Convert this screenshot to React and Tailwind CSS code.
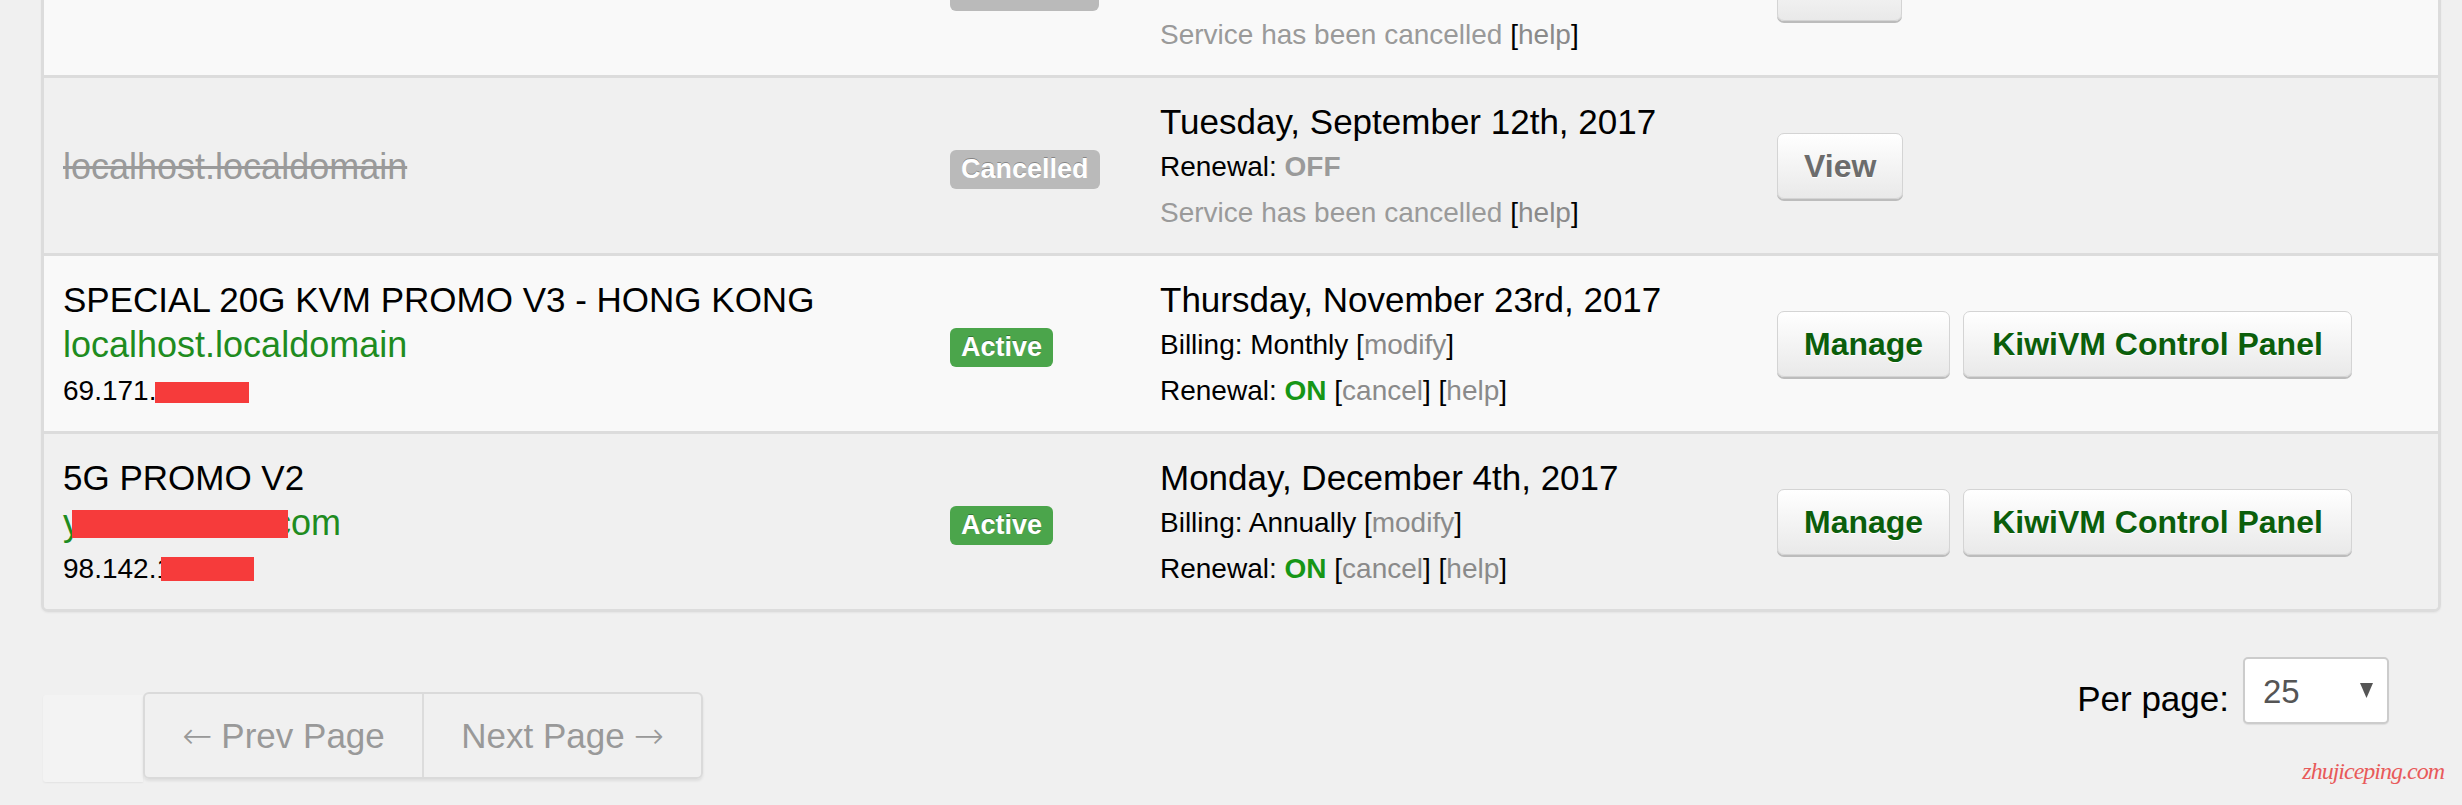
import React from 'react';

const rows = [
    { status: 'Cancelled', host: '', due: '', partial: true },
    { status: 'Cancelled', host: 'localhost.localdomain', due: 'Tuesday, September 12th, 2017' },
    {
        status: 'Active',
        title: 'SPECIAL 20G KVM PROMO V3 - HONG KONG',
        host: 'localhost.localdomain',
        ip: '69.171.',
        due: 'Thursday, November 23rd, 2017',
        billing: 'Monthly',
    },
    {
        status: 'Active',
        title: '5G PROMO V2',
        email: true,
        ip: '98.142.1',
        due: 'Monday, December 4th, 2017',
        billing: 'Annually',
    },
];

function Badge({ status, blank }) {
    const active = status === 'Active';
    return (
        <span
            className={`mt-[7px] h-[39px] px-[11px] flex items-center rounded-[6px] text-[27px] font-bold leading-none text-white [text-shadow:0_-1px_0_rgba(0,0,0,0.3)] ${active ? 'bg-[#4ba54b]' : 'bg-[#bababa]'} ${blank ? 'w-[149px]' : ''}`}
        >
            {blank ? null : status}
        </span>
    );
}

function Btn({ children, green, wide }) {
    return (
        <div
            className={`h-[66px] ${wide ? 'px-[28px]' : 'px-[26px]'} flex items-center rounded-[7px] border border-[#d4d4d4] bg-linear-to-b from-white to-[#e9e9e9] shadow-[0_2px_0_#bcbcbc] text-[32px] font-bold leading-none [text-shadow:0_1px_0_#ffffff] ${green ? 'text-[#0b5e0b]' : 'text-[#6c6c6c]'}`}
        >
            {children}
        </div>
    );
}

function Link({ children }) {
    return (
        <span>
            [<span className="text-[#8a8a8a]">{children}</span>]
        </span>
    );
}

function Redact({ w, h, shift = 0 }) {
    return (
        <span
            className="relative z-10 inline-block bg-[#f63b3b] align-[-3px]"
            style={{ width: w, height: h, marginLeft: shift }}
        />
    );
}

function ServiceRow({ row, index }) {
    const cancelled = row.status === 'Cancelled';
    return (
        <div
            className={`box-content h-[175px] grid grid-cols-[906px_210px_617px_1fr] ${index % 2 === 0 ? 'bg-[#f9f9f9]' : 'bg-[#f0f0f0]'} ${index > 0 ? 'border-t-[3px] border-[#dcdcdc]' : ''}`}
        >
            {/* product / host */}
            <div className="pl-[19px] pt-[3px] flex flex-col justify-center">
                {row.title && <div className="leading-[45.5px] text-[35px] whitespace-nowrap">{row.title}</div>}
                {cancelled ? (
                    row.host && <div className="leading-[45.5px] text-[36px] text-[#9a9a9a] line-through">{row.host}</div>
                ) : row.email ? (
                    <div className="leading-[45.5px] text-[36px] text-[#1f8c1f] whitespace-nowrap">
                        y<Redact w={216} h={28} shift={-9} />
                        <span className="ml-[-15px]">com</span>
                    </div>
                ) : (
                    <div className="leading-[45.5px] text-[36px] text-[#1f8c1f]">{row.host}</div>
                )}
                {row.ip && (
                    <div className="leading-[45.5px] text-[28px] whitespace-nowrap">
                        {row.ip}
                        {row.email ? <Redact w={93} h={24} shift={-11} /> : <Redact w={94} h={21} shift={-1} />}
                    </div>
                )}
            </div>

            {/* status */}
            <div className="flex items-center">
                <Badge status={row.status} blank={row.partial} />
            </div>

            {/* due date */}
            <div className="pt-[3px] flex flex-col justify-center text-[28px] whitespace-nowrap">
                {row.partial ? (
                    <div className="h-[91px]" />
                ) : (
                    <>
                        <div className="leading-[45.5px] text-[35px]">{row.due}</div>
                        {cancelled ? (
                            <div className="leading-[45.5px]">
                                Renewal: <span className="font-bold text-[#9a9a9a]">OFF</span>
                            </div>
                        ) : (
                            <div className="leading-[45.5px]">
                                Billing: {row.billing} <Link>modify</Link>
                            </div>
                        )}
                    </>
                )}
                {cancelled ? (
                    <div className="leading-[45.5px] text-[#9a9a9a]">
                        Service has been cancelled <span className="text-black"><Link>help</Link></span>
                    </div>
                ) : (
                    <div className="leading-[45.5px]">
                        Renewal: <span className="font-bold text-[#169616]">ON</span> <Link>cancel</Link> <Link>help</Link>
                    </div>
                )}
            </div>

            {/* actions */}
            <div className="flex items-center gap-[13px]">
                {cancelled ? (
                    row.partial ? (
                        <div className="h-[66px] w-[125px] rounded-[7px] border border-[#d4d4d4] bg-linear-to-b from-white to-[#e9e9e9] shadow-[0_2px_0_#bcbcbc]" />
                    ) : (
                        <Btn>View</Btn>
                    )
                ) : (
                    <>
                        <Btn green>Manage</Btn>
                        <Btn green wide>KiwiVM Control Panel</Btn>
                    </>
                )}
            </div>
        </div>
    );
}

export default function App() {
    return (
        <div className="relative h-[805px] overflow-hidden bg-[#f0f0f0] text-black font-['Liberation_Sans',Arial,sans-serif]">
            <div className="ml-[41px] w-[2400px] -mt-[100px] border-x-[3px] border-b-[3px] border-[#dcdcdc] rounded-b-[7px] overflow-hidden shadow-[0_1px_2px_rgba(0,0,0,0.05)]">
                {rows.map((row, i) => (
                    <ServiceRow key={i} row={row} index={i} />
                ))}
            </div>

            <div className="flex justify-between items-start">
                {/* pager */}
                <div className="ml-[43px] mt-[80px] flex items-start">
                    <div className="mt-[3px] w-[100px] h-[87px] bg-[#f3f3f3] shadow-[0_1px_2px_rgba(0,0,0,0.06)] rounded-l-[3px]" />
                    <div className="flex h-[87px] border-2 border-[#dadada] rounded-[6px] shadow-[0_2px_3px_rgba(0,0,0,0.08)] text-[35px] text-[#999999] leading-none">
                        <div className="w-[277px] flex items-center justify-center gap-[9px]">
                            <span className="font-['DejaVu_Sans',sans-serif] text-[36px] font-extralight">←</span>
                            <span>Prev Page</span>
                        </div>
                        <div className="w-[279px] flex items-center justify-center gap-[9px] border-l-2 border-[#dcdcdc]">
                            <span>Next Page</span>
                            <span className="font-['DejaVu_Sans',sans-serif] text-[36px] font-extralight">→</span>
                        </div>
                    </div>
                </div>

                {/* per page */}
                <div className="mt-[45px] mr-[73px] flex items-start gap-[14px]">
                    <span className="mt-[24px] text-[35px] leading-[35px]">Per page:</span>
                    <div className="w-[146px] h-[67px] pl-[18px] pr-[14px] pt-[16px] flex justify-between items-start bg-white border-2 border-[#cccccc] rounded-[5px] shadow-[0_1px_1px_rgba(0,0,0,0.08)]">
                        <span className="text-[33px] leading-[33px] text-[#555555]">25</span>
                        <svg width="13" height="15" viewBox="0 0 13 15" className="mt-[8px]">
                            <path d="M0 0 H13 L6.5 15 Z" fill="#555555" />
                        </svg>
                    </div>
                </div>
            </div>

            <div className="absolute right-[18px] bottom-[22px] text-[24px] leading-none italic text-[#e85a5a] font-['Liberation_Serif',serif] tracking-[-1px]">
                zhujiceping.com
            </div>
        </div>
    );
}
